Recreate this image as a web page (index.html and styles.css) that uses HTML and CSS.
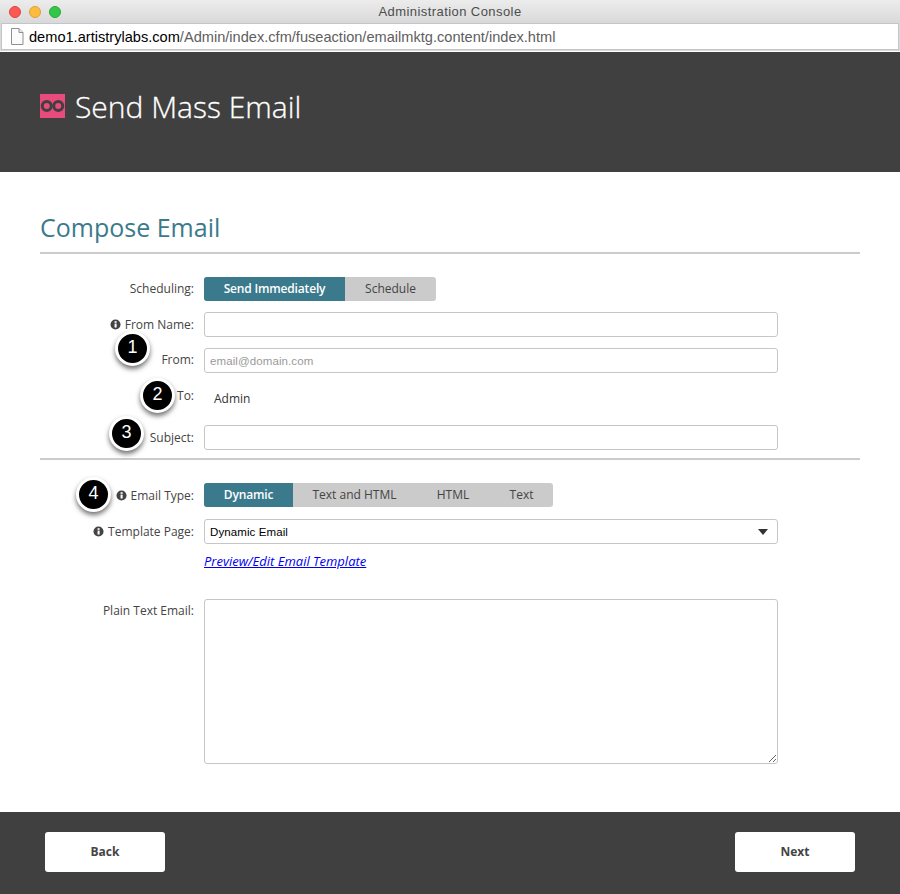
FILE: index.html
```html
<!DOCTYPE html>
<html lang="en">
<head>
  <meta charset="UTF-8">
  <meta name="viewport" content="width=device-width, initial-scale=1.0">
  <title>Administration Console</title>
  <link rel="stylesheet" href="styles.css">
</head>
<body>

<!-- Browser window bar -->
<div class="titlebar">
  <div class="lights">
    <span class="light red"></span>
    <span class="light yellow"></span>
    <span class="light green"></span>
  </div>
  <div class="window-title">Administration Console</div>
</div>
<div class="addressbar">
  <svg class="page-icon" width="14" height="17" viewBox="0 0 14 17">
    <path d="M1.5 .5H9L13 4.5V16.5H1.5Z" fill="#fbfbfb" stroke="#8f8f8f"/>
    <path d="M9 .5V4.5H13" fill="#e8e8e8" stroke="#8f8f8f"/>
  </svg>
  <span class="url"><span class="host">demo1.artistrylabs.com</span>/Admin/index.cfm/fuseaction/emailmktg.content/index.html</span>
</div>

<header class="page-header">
  <svg class="logo" width="25" height="24" viewBox="0 0 25 24">
    <rect width="25" height="24" fill="#ea4b7d"/>
    <circle cx="6.75" cy="12" r="4.5" fill="none" stroke="#404040" stroke-width="3"/>
    <circle cx="18.25" cy="12" r="4.5" fill="none" stroke="#404040" stroke-width="3"/>
  </svg>
  <h1>Send Mass Email</h1>
</header>

<main class="content">
  <h2>Compose Email</h2>

  <div class="form-section">
    <div class="form-row row-raised">
      <label>Scheduling:</label>
      <div class="toggle">
        <span class="toggle-item active item-now">Send Immediately</span>
        <span class="toggle-item item-schedule">Schedule</span>
      </div>
    </div>
    <div class="form-row">
      <label><svg class="info" viewBox="0 0 12 12"><circle cx="6" cy="6" r="5.5" fill="#444"/><rect x="5" y="5" width="2.2" height="4.3" fill="#fff"/><rect x="5" y="2.4" width="2.2" height="1.8" fill="#fff"/></svg>From Name:</label>
      <input class="field" type="text">
    </div>
    <div class="form-row row-raised">
      <label>From:</label>
      <input class="field" type="text" placeholder="email@domain.com">
    </div>
    <div class="form-row row-to">
      <label>To:</label>
      <span class="static-value">Admin</span>
    </div>
    <div class="form-row row-subject">
      <label>Subject:</label>
      <input class="field" type="text">
    </div>
  </div>

  <div class="form-section second">
    <div class="form-row row-type">
      <label><svg class="info" viewBox="0 0 12 12"><circle cx="6" cy="6" r="5.5" fill="#444"/><rect x="5" y="5" width="2.2" height="4.3" fill="#fff"/><rect x="5" y="2.4" width="2.2" height="1.8" fill="#fff"/></svg>Email Type:</label>
      <div class="toggle">
        <span class="toggle-item active item-dynamic">Dynamic</span>
        <span class="toggle-item item-both">Text and HTML</span>
        <span class="toggle-item item-html">HTML</span>
        <span class="toggle-item item-text">Text</span>
      </div>
    </div>
    <div class="form-row row-template">
      <label><svg class="info" viewBox="0 0 12 12"><circle cx="6" cy="6" r="5.5" fill="#444"/><rect x="5" y="5" width="2.2" height="4.3" fill="#fff"/><rect x="5" y="2.4" width="2.2" height="1.8" fill="#fff"/></svg>Template Page:</label>
      <div class="field select">Dynamic Email<span class="caret"></span></div>
    </div>
    <div class="form-row row-link">
      <span></span>
      <a href="#">Preview/Edit Email Template</a>
    </div>
    <div class="form-row row-plain">
      <label>Plain Text Email:</label>
      <textarea class="field"></textarea>
    </div>
  </div>

  <!-- Numbered callouts -->
  <span class="callout c1">1</span>
  <span class="callout c2">2</span>
  <span class="callout c3">3</span>
  <span class="callout c4">4</span>
</main>

<footer class="page-footer">
  <button>Back</button>
  <button>Next</button>
</footer>

</body>
</html>
```

FILE: styles.css
```css
/* General Styling */
html, body {
  margin: 0;
  padding: 0;
}

body {
  width: 900px;
  height: 894px;
  overflow: hidden;
  background: #ffffff;
  font-family: "Open Sans", sans-serif;
  color: #444444;
  position: relative;
}

/* Window bar */
.titlebar {
  height: 23px;
  background: linear-gradient(#ececec, #d9d9d9);
  position: relative;
  display: flex;
  align-items: center;
  justify-content: center;
}

.lights {
  position: absolute;
  left: 9px;
  top: 6px;
  display: flex;
  gap: 8px;
}

.light {
  width: 12px;
  height: 12px;
  border-radius: 50%;
  box-sizing: border-box;
}

.red { background: #fc5753; border: 1px solid #e3443f; }
.yellow { background: #fdbc40; border: 1px solid #e0a030; }
.green { background: #33c748; border: 1px solid #27aa35; }

.window-title {
  font-family: "Liberation Sans", sans-serif;
  font-size: 13px;
  color: #4d4d4d;
  letter-spacing: 0.43px;
}

.addressbar {
  height: 27px;
  margin: 0 1px;
  box-sizing: border-box;
  background: #ffffff;
  border: 1px solid #c3c5cc;
  display: flex;
  align-items: center;
  padding-left: 8px;
  gap: 5px;
  box-shadow: 0 0 0 1px #d9d9d9;
}

.url {
  font-family: "Liberation Sans", sans-serif;
  font-size: 14.6px;
  color: #5e5e5e;
  white-space: nowrap;
}

.host {
  color: #000000;
}

/* Header */
.page-header {
  margin-top: 2px;
  height: 120px;
  background: #404040;
  display: flex;
  align-items: center;
  padding-left: 40px;
  padding-bottom: 12px;
  box-sizing: border-box;
  gap: 10px;
}

h1 {
  margin: 0;
  font-size: 30px;
  font-weight: 300;
  color: #ffffff;
  -webkit-text-stroke: 0.3px #ffffff;
}

/* Content */
.content {
  height: 640px;
  padding: 0 40px;
  position: relative;
}

h2 {
  margin: 0;
  padding-top: 37px;
  height: 43px;
  line-height: 36px;
  font-size: 25px;
  font-weight: 400;
  color: #3b7a8c;
  border-bottom: 2px solid #cccccc;
}

.form-section {
  padding-top: 23px;
  display: flex;
  flex-direction: column;
}

.form-section.second {
  border-top: 2px solid #cccccc;
}

.form-row {
  display: grid;
  grid-template-columns: 154px 574px;
  column-gap: 10px;
  align-items: center;
  margin-bottom: 11px;
  font-size: 12px;
}

.form-row label {
  text-align: right;
  color: #444444;
  white-space: nowrap;
}

.row-raised label {
  padding-bottom: 2px;
}

.info {
  width: 11px;
  height: 11px;
  margin-right: 4px;
  vertical-align: -1px;
}

.field {
  display: block;
  width: 574px;
  height: 25px;
  box-sizing: border-box;
  border: 1px solid #c6c6c6;
  border-radius: 3px;
  background: #ffffff;
  padding: 0 5px;
  margin: 0;
  font-family: "Liberation Sans", sans-serif;
  font-size: 11.5px;
  letter-spacing: 0.1px;
  color: #000000;
}

.field::placeholder {
  color: #9a9a9a;
  opacity: 1;
}

/* Toggles */
.toggle {
  display: flex;
  height: 24px;
  background: #cbcbcb;
  border-radius: 3px;
  overflow: hidden;
  justify-self: start;
}

.toggle-item {
  display: flex;
  align-items: center;
  justify-content: center;
  padding-bottom: 2px;
  box-sizing: border-box;
  font-size: 12px;
  color: #444444;
}

.toggle-item.active {
  background: #3b7a8c;
  color: #ffffff;
  font-weight: 600;
  letter-spacing: -0.17px;
}

.item-now { width: 141px; }
.item-schedule { width: 91px; }
.item-dynamic { width: 89px; }
.item-both { width: 123px; }
.item-html { width: 74px; }
.item-text { width: 63px; }

.row-to {
  height: 27px;
  margin-bottom: 14px;
}

.row-to label {
  position: relative;
  top: -2px;
}

.static-value {
  padding-left: 10px;
  padding-top: 2px;
  color: #333333;
}

.row-subject {
  margin-bottom: 8px;
}

.row-type {
  margin-bottom: 12px;
}

.row-template {
  margin-bottom: 10px;
}

/* Select */
.select {
  display: flex;
  align-items: center;
  justify-content: space-between;
  padding-right: 9px;
}

.caret {
  width: 0;
  height: 0;
  border-left: 5.5px solid transparent;
  border-right: 5.5px solid transparent;
  border-top: 6px solid #333333;
}

.row-link {
  margin-bottom: 31px;
}

.row-link a {
  font-style: italic;
  font-size: 13px;
  color: #0000ee;
  line-height: 14px;
  justify-self: start;
}

.row-plain {
  align-items: start;
}

.row-plain label {
  padding-top: 3px;
}

textarea.field {
  height: 165px;
  resize: both;
}

/* Callouts */
.callout {
  position: absolute;
  width: 29px;
  height: 29px;
  border: 3px solid #ffffff;
  border-radius: 50%;
  background: #000000;
  color: #ffffff;
  font-family: "Liberation Sans", sans-serif;
  font-size: 18px;
  line-height: 27px;
  text-align: center;
  box-shadow: 0 3px 5px rgba(0, 0, 0, 0.55);
}

.c1 { left: 115px; top: 159px; }
.c2 { left: 140px; top: 206px; }
.c3 { left: 109px; top: 244px; }
.c4 { left: 76px; top: 305px; }

/* Footer */
.page-footer {
  height: 82px;
  background: #404040;
  box-sizing: border-box;
  padding: 20px 45px 0;
  display: flex;
  justify-content: space-between;
  align-items: flex-start;
}

.page-footer button {
  width: 120px;
  height: 40px;
  padding-bottom: 2px;
  background: #ffffff;
  border: none;
  border-radius: 3px;
  font-family: "Open Sans", sans-serif;
  font-size: 12px;
  font-weight: 700;
  color: #444444;
}
```
